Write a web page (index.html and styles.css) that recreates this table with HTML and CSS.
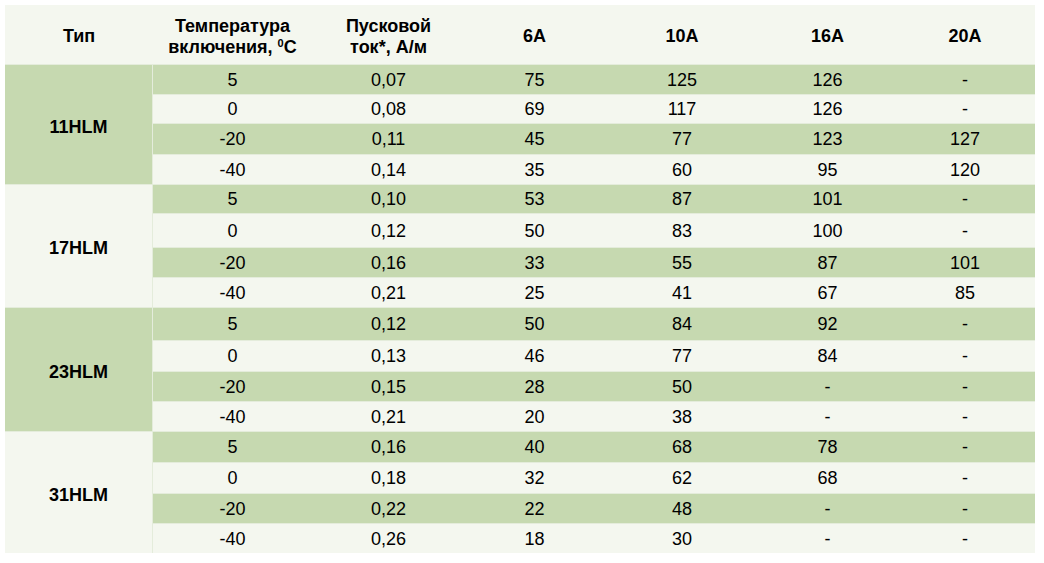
FILE: index.html
```html
<!DOCTYPE html>
<html lang="ru">
<head>
<meta charset="utf-8">
<link rel="stylesheet" href="styles.css">
</head>
<body>
<div class="page">
<table class="spec">
<colgroup>
<col class="c1"><col class="c2"><col class="c3"><col class="c4"><col class="c5"><col class="c6"><col class="c7">
</colgroup>
<thead>
<tr>
<th>Тип</th>
<th>Температура<br>включения, <sup class="deg">0</sup>C</th>
<th>Пусковой<br>ток*, А/м</th>
<th>6A</th>
<th>10A</th>
<th>16A</th>
<th>20A</th>
</tr>
</thead>
<tbody>
<tr class="g"><td rowspan="4" class="type tg">11HLM</td><td>5</td><td>0,07</td><td>75</td><td>125</td><td>126</td><td>-</td></tr>
<tr class="l"><td>0</td><td>0,08</td><td>69</td><td>117</td><td>126</td><td>-</td></tr>
<tr class="g"><td>-20</td><td>0,11</td><td>45</td><td>77</td><td>123</td><td>127</td></tr>
<tr class="l"><td>-40</td><td>0,14</td><td>35</td><td>60</td><td>95</td><td>120</td></tr>

<tr class="g"><td rowspan="4" class="type tl">17HLM</td><td>5</td><td>0,10</td><td>53</td><td>87</td><td>101</td><td>-</td></tr>
<tr class="l"><td>0</td><td>0,12</td><td>50</td><td>83</td><td>100</td><td>-</td></tr>
<tr class="g"><td>-20</td><td>0,16</td><td>33</td><td>55</td><td>87</td><td>101</td></tr>
<tr class="l"><td>-40</td><td>0,21</td><td>25</td><td>41</td><td>67</td><td>85</td></tr>

<tr class="g"><td rowspan="4" class="type tg">23HLM</td><td>5</td><td>0,12</td><td>50</td><td>84</td><td>92</td><td>-</td></tr>
<tr class="l"><td>0</td><td>0,13</td><td>46</td><td>77</td><td>84</td><td>-</td></tr>
<tr class="g"><td>-20</td><td>0,15</td><td>28</td><td>50</td><td>-</td><td>-</td></tr>
<tr class="l"><td>-40</td><td>0,21</td><td>20</td><td>38</td><td>-</td><td>-</td></tr>

<tr class="g"><td rowspan="4" class="type tl">31HLM</td><td>5</td><td>0,16</td><td>40</td><td>68</td><td>78</td><td>-</td></tr>
<tr class="l"><td>0</td><td>0,18</td><td>32</td><td>62</td><td>68</td><td>-</td></tr>
<tr class="g"><td>-20</td><td>0,22</td><td>22</td><td>48</td><td>-</td><td>-</td></tr>
<tr class="l"><td>-40</td><td>0,26</td><td>18</td><td>30</td><td>-</td><td>-</td></tr>
</tbody>
</table>
</div>
</body>
</html>
```
FILE: styles.css
```css
html, body {
  margin: 0;
  padding: 0;
  background: #ffffff;
}

.page {
  padding: 5px;
}

.spec {
  table-layout: fixed;
  width: 1030px;
  border-collapse: separate;
  border-spacing: 0;
  font-family: "Liberation Sans", Arial, sans-serif;
  font-size: 18px;
  color: #000000;
}

.c1 { width: 148px; }
.c2 { width: 159px; }
.c3 { width: 153px; }
.c4 { width: 139px; }
.c5 { width: 156px; }
.c6 { width: 135px; }
.c7 { width: 140px; }

.spec th {
  height: 59px;
  padding: 4px 0 0 0;
  box-sizing: border-box;
  background: #f4f7ef;
  font-weight: bold;
  line-height: 21px;
  text-align: center;
  vertical-align: middle;
}

.deg {
  font-size: 11px;
  line-height: 0;
  vertical-align: 6px;
}

.spec td {
  padding: 0;
  text-align: center;
  vertical-align: middle;
  line-height: 20px;
  border-top: 1px solid #e4ecdb;
}

.spec tbody tr { height: 30px; }
.spec tbody tr:nth-child(2) { height: 29px; }
.spec tbody tr:nth-child(3) { height: 31px; }
.spec tbody tr:nth-child(5) { height: 29px; }
.spec tbody tr:nth-child(6) { height: 34px; }
.spec tbody tr:nth-child(9) { height: 33px; }
.spec tbody tr:nth-child(10) { height: 31px; }
.spec tbody tr:nth-child(13) { height: 31px; }
.spec tbody tr:nth-child(14) { height: 31px; }

.spec tr.g td { background: #c6d9b0; }
.spec tr.l td { background: #f4f7ef; }

.spec td.type {
  font-weight: bold;
  border-right: 1px solid #e4ecdb;
  padding-top: 4px;
}

.spec tr td.tg { background: #c6d9b0; }
.spec tr td.tl { background: #f4f7ef; }
```
